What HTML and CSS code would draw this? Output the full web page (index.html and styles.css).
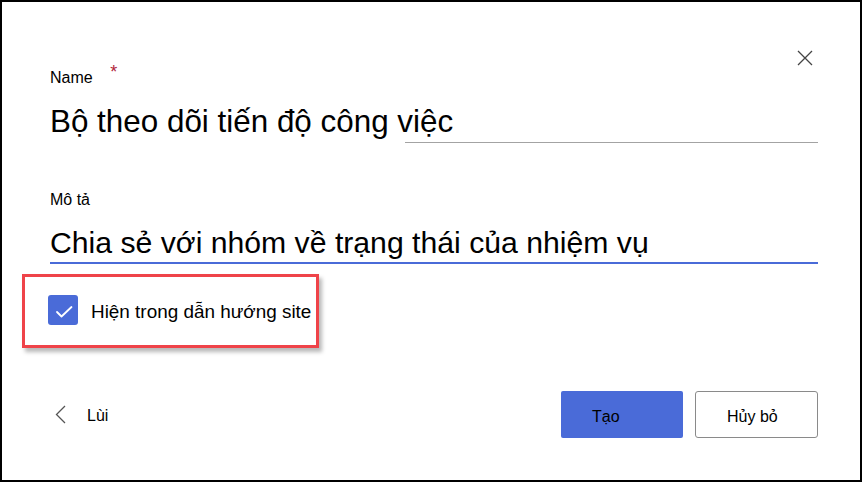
FILE: index.html
```html
<!DOCTYPE html>
<html lang="vi">
<head>
<meta charset="utf-8">
<title>Tạo danh sách</title>
<link rel="stylesheet" href="styles.css">
</head>
<body>
<div class="dialog">
  <div class="header">
    <button class="close" aria-label="Đóng">
      <svg width="16" height="16" viewBox="0 0 16 16"><path d="M1 1L15 15M15 1L1 15" stroke="#444" stroke-width="1.3" fill="none"/></svg>
    </button>
  </div>
  <div class="field">
    <div class="label">Name <span class="req">*</span></div>
    <div class="value name-value">Bộ theo dõi tiến độ công việc</div>
    <div class="name-line"></div>
  </div>
  <div class="field desc">
    <div class="label">Mô tả</div>
    <div class="value desc-value">Chia sẻ với nhóm về trạng thái của nhiệm vụ</div>
  </div>
  <div class="highlight">
    <div class="checkbox">
      <svg width="30" height="30" viewBox="0 0 30 30"><path d="M9 17L13.5 21.5L23.5 12" stroke="#fff" stroke-width="1.8" fill="none" stroke-linecap="round" stroke-linejoin="round"/></svg>
    </div>
    <span class="check-label">Hiện trong dẫn hướng site</span>
  </div>
  <div class="footer">
    <div class="back">
      <svg width="11" height="19" viewBox="0 0 11 19"><path d="M10 1L1.5 9.5L10 18" stroke="#555" stroke-width="1.3" fill="none"/></svg>
      <span>Lùi</span>
    </div>
    <div class="actions">
      <button class="btn primary">Tạo</button>
      <button class="btn secondary">Hủy bỏ</button>
    </div>
  </div>
</div>
</body>
</html>
```
FILE: styles.css
```css
* { box-sizing: border-box; }
html, body { margin: 0; padding: 0; background: #fff; }
body { font-family: "Liberation Sans", Arial, sans-serif; color: #000; }

.dialog {
  width: 862px;
  height: 482px;
  border: 2px solid #000;
  padding: 48px 42px 0 48px;
  display: flex;
  flex-direction: column;
}

.header {
  display: flex;
  justify-content: flex-end;
  height: 17px;
}
.close {
  border: 0;
  background: none;
  padding: 0;
  margin-right: 5px;
  width: 16px;
  height: 16px;
  display: block;
}
.close svg { display: block; }

.label {
  font-size: 16px;
  line-height: 20px;
  height: 20px;
}
.req {
  color: #b0243a;
  font-size: 18px;
  margin-left: 13px;
  position: relative;
  top: -5px;
}

.value { white-space: nowrap; }
.name-value {
  margin-top: 15px;
  font-size: 31.4px;
  line-height: 40px;
}
.name-line {
  height: 1px;
  background: #a3a3a3;
  margin-left: 355px;
}

.desc { margin-top: 47px; }
.desc-value {
  margin-top: 15px;
  font-size: 30.2px;
  line-height: 36px;
  padding-bottom: 1px;
  border-bottom: 2px solid #4a6bd8;
}

.highlight {
  margin-top: 10px;
  margin-left: -28px;
  width: 297px;
  height: 74px;
  border: 3px solid #ef4349;
  box-shadow: 3px 4px 4px rgba(0, 0, 0, 0.28);
  display: flex;
  align-items: center;
  gap: 13px;
  padding: 0 0 2px 23px;
}
.checkbox {
  width: 30px;
  height: 30px;
  background: #4a6bd8;
  border-radius: 3px;
  flex: none;
}
.checkbox svg { display: block; }
.check-label {
  font-size: 18.9px;
  white-space: nowrap;
  position: relative;
  top: 2px;
}

.footer {
  margin-top: 43px;
  display: flex;
  justify-content: space-between;
  align-items: center;
}
.back {
  display: flex;
  align-items: center;
  gap: 21px;
  font-size: 16px;
  padding-left: 5px;
}
.back svg { display: block; }
.back span { position: relative; top: 1px; }

.actions { display: flex; gap: 12px; }
.btn {
  width: 122px;
  height: 47px;
  font-family: "Liberation Sans", Arial, sans-serif;
  font-size: 16px;
  color: #000;
  text-align: left;
  padding: 4px 0 0 31px;
  border-radius: 2px;
}
.primary {
  background: #4a6bd8;
  border: 0;
}
.secondary {
  width: 123px;
  background: #fff;
  border: 1px solid #8a8a8a;
  border-radius: 3px;
  padding-left: 31px;
}
```
